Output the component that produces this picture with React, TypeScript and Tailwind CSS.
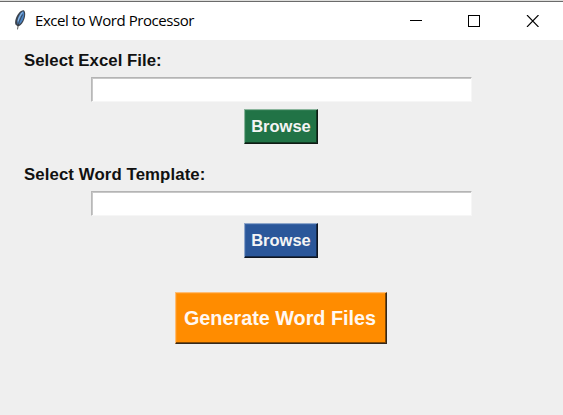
import React from "react";

function Feather() {
  return (
    <svg width="12" height="20" viewBox="0 0 12 20" className="block">
      <path d="M9.8 0.3C11.9 1.8 11.6 7.4 9.3 11.4C7.7 14.3 5.6 16.3 3.7 16.2L1.6 14.8C0.2 11.6 2.2 6.2 4.9 2.9C6.5 1 8.3 0 9.8 0.3Z" fill="#3c434d" />
      <path d="M9.3 1.3C10.8 3.4 10 8 8.1 11.2C6.7 13.5 5.2 14.7 3.9 14.6C2.6 11.6 3.8 7.3 5.7 4.4C6.9 2.6 8.1 1.4 9.3 1.3Z" fill="#4a83c4" />
      <path d="M8.6 2.4C6.2 5 4.6 8.4 4 11.4" stroke="#a5c6e8" strokeWidth="0.9" fill="none" />
      <path d="M8.6 4.5C6 9.5 4.2 13.4 3.5 19.4" stroke="#343434" strokeWidth="0.8" fill="none" />
    </svg>
  );
}

function TitleBar() {
  return (
    <header className="flex h-[40px] items-center justify-between border-t border-[#dededc] bg-white">
      <div className="flex h-full w-full items-center justify-between border-t border-[#6b6b6b]">
        <div className="flex items-center pb-[2px] pl-[14px]">
          <Feather />
          <h1 className="ml-[9px] whitespace-nowrap font-['Open_Sans','Noto_Sans',sans-serif] text-[15px] leading-[20px] tracking-[-0.44px] text-black">
            Excel to Word Processor
          </h1>
        </div>
        <div className="flex items-center gap-[46px] pr-[24px]">
          <svg width="12" height="12" shapeRendering="crispEdges"><path d="M0 5.5H12" stroke="#000" /></svg>
          <svg width="12" height="12" shapeRendering="crispEdges"><rect x="0.5" y="0.5" width="11" height="11" fill="none" stroke="#000" /></svg>
          <svg width="13" height="12"><path d="M1 0L12.5 12M12.5 0L1 12" stroke="#000" strokeWidth="1.1" /></svg>
        </div>
      </div>
    </header>
  );
}

function Field({ label, button, tracking }: { label: string; button: string; tracking: string }) {
  return (
    <section className="flex h-[114px] flex-col items-center">
      <label className={"w-full pl-[24px] pt-[11px] text-[16.8px] leading-[20px] " + tracking}>{label}</label>
      <input className="mt-[6px] h-[25px] w-[381px] shrink-0 border border-b-[#f6f6f6] border-l-[#b8b8b8] border-r-[#f6f6f6] border-t-[#b4b4b4] bg-white shadow-[inset_1px_1px_0_#c8c8c8] outline-none" />
      <button className={"mr-[2px] mt-[7px] h-[35px] w-[74px] shrink-0 border pb-px pl-px text-[16.5px] leading-[20px] text-[#f4f4f4] " + button}>
        Browse
      </button>
    </section>
  );
}

export default function App() {
  return (
    <div className="h-[415px] w-[563px] overflow-hidden bg-[#efefef] font-['Liberation_Sans',Arial,sans-serif] font-bold text-[#111]">
      <div className="font-normal"><TitleBar /></div>
      <main className="flex flex-col">
        <Field label="Select Excel File:" tracking="tracking-[0.03px]" button="bg-[#217346] border-t-[#8ab59c] border-l-[#8ab59c] border-r-[#101a14] border-b-[#101a14] shadow-[inset_-1px_-1px_0_#113a23,inset_1px_1px_0_#2d7b50]" />
        <Field label="Select Word Template:" tracking="tracking-[0.1px]" button="bg-[#2b579a] border-t-[#8fa7cb] border-l-[#8fa7cb] border-r-[#10151e] border-b-[#10151e] shadow-[inset_-1px_-1px_0_#162c4d,inset_1px_1px_0_#3963a3]" />
        <button className="ml-[175px] mt-[24px] h-[52px] w-[212px] whitespace-nowrap border border-b-[#33291e] border-l-[#ffbd73] border-r-[#33291e] border-t-[#ffbd73] bg-[#ff8c00] pr-[2px] text-[19.8px] leading-[24px] text-[#fff8f2] shadow-[inset_-1px_-1px_0_#804806,inset_1px_1px_0_#ff9618]">
          Generate Word Files
        </button>
      </main>
    </div>
  );
}
